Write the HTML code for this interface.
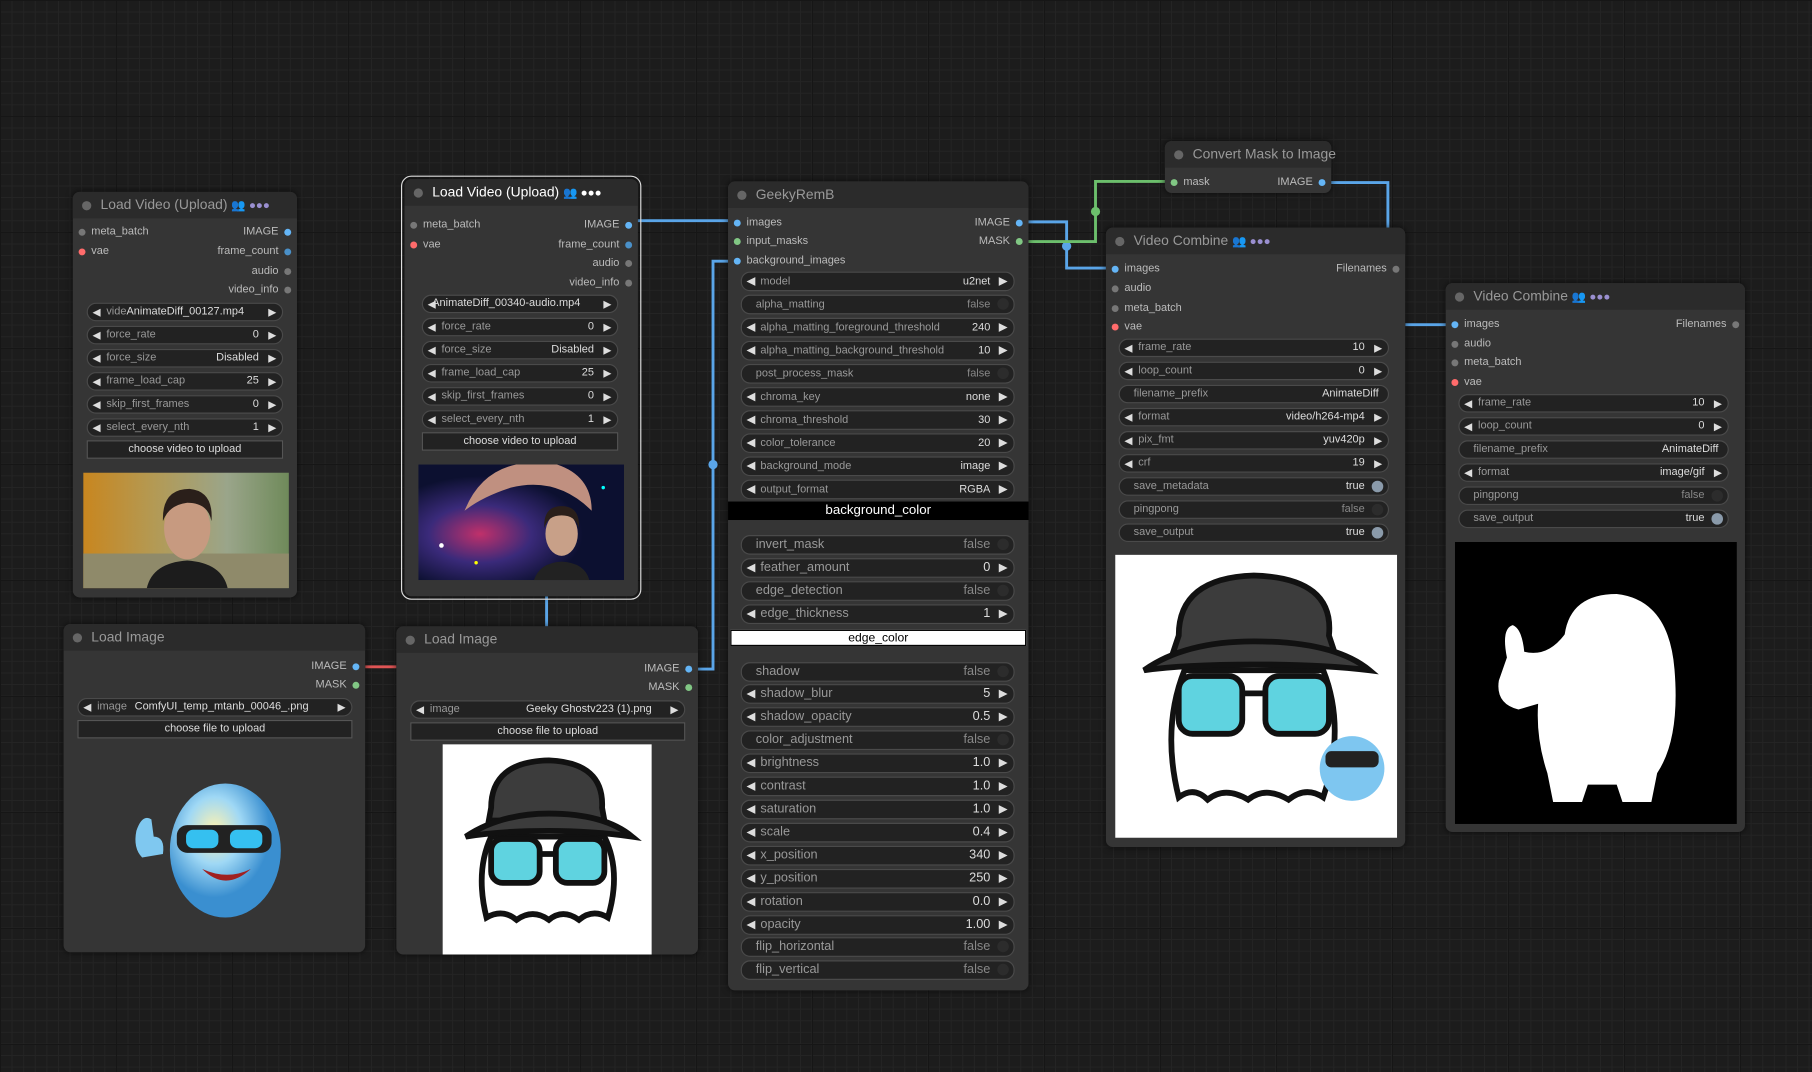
<!DOCTYPE html>
<html><head><meta charset="utf-8">
<style>
html,body{margin:0;padding:0;}
body{width:1812px;height:1072px;overflow:hidden;background:#1c1c1c;
background-image:linear-gradient(#161616 1px,transparent 1px),linear-gradient(90deg,#161616 1px,transparent 1px),linear-gradient(#242424 1px,transparent 1px),linear-gradient(90deg,#242424 1px,transparent 1px);
background-size:116px 116px,116px 116px,11.6px 11.6px,11.6px 11.6px;font-family:"Liberation Sans",sans-serif;}
#c{position:absolute;left:0;top:0;width:1568px;height:928px;transform:scale(1.15561);transform-origin:0 0;}
.n{position:absolute;background:#353535;border-radius:6px;box-shadow:0 0 6px rgba(0,0,0,.6);}
.t{position:absolute;left:0;right:0;top:0;height:23px;background:#2b2b2b;border-radius:6px 6px 0 0;color:#999;font-size:12px;line-height:23px;padding-left:24px;white-space:nowrap;}
.t:before{content:"";position:absolute;left:8px;top:8px;width:8px;height:8px;border-radius:50%;background:#666;}
.vhs{color:#9a8fd0;font-size:10px;letter-spacing:0px;}
.s{position:absolute;font-size:9.5px;color:#bbb;height:12px;line-height:12px;white-space:nowrap;}
.s.l{left:16px}.s.r{right:16px;text-align:right}
.s.l:before,.s.r:after{content:"";position:absolute;top:3px;width:6px;height:6px;border-radius:50%;background:var(--c,#777);}
.s.l:before{left:-11px}.s.r:after{right:-11px}
.w{position:absolute;height:14px;border:1px solid #4a4a4a;border-radius:8px;background:#222;font-size:9.5px;line-height:14px;color:#999;white-space:nowrap;overflow:hidden;}
.w .a{position:absolute;left:4px;color:#ddd;font-size:9px}
.w .b{position:absolute;right:5px;color:#ddd;font-size:9px}
.w .lb{position:absolute;left:16px}
.w .v{position:absolute;right:20px;color:#ddd}
.w.tg .lb{left:12px}.w.tg .v{right:20px;color:#888}
.w.tg .d{position:absolute;right:4px;top:2px;width:10px;height:10px;border-radius:50%;background:#2c2c2c}
.w.tg.on .v{color:#ddd}.w.tg.on .d{background:#8a9aaa}
.big .w{height:15px;line-height:15px;font-size:11px}
.big .w .a,.big .w .b{font-size:10px}
.bt{position:absolute;height:14px;border:1px solid #555;background:#222;color:#ddd;font-size:9.5px;line-height:14px;text-align:center;}
</style></head><body>
<div id="c">
<svg width="1568" height="928" style="position:absolute;left:0;top:0" fill="none" stroke-width="2.5">
<path d="M540 191 H637" stroke="#5aa5e8"/>
<path d="M596 579 H617 V226 H637" stroke="#5aa5e8"/>
<circle cx="617" cy="402" r="4" fill="#5aa5e8"/>
<path d="M473 516 V542" stroke="#5aa5e8"/>
<path d="M316 577 H343" stroke="#e05555"/>
<path d="M882 192 H923 V232 H963" stroke="#5aa5e8"/>
<circle cx="923" cy="213" r="4" fill="#5aa5e8"/>
<path d="M882 209 H948 V157 H1015" stroke="#6cbf6c"/>
<circle cx="948" cy="183" r="4" fill="#6cbf6c"/>
<path d="M1146 158 H1201 V200" stroke="#5aa5e8"/>
<path d="M1216 281 H1258" stroke="#5aa5e8"/>
</svg>

<!-- Load Video 1 -->
<div class="n" style="left:63px;top:166px;width:194px;height:351px">
<div class="t">Load Video (Upload) <span class="vhs">👥 ●●●</span></div>
<div class="s l" style="top:29px">meta_batch</div><div class="s r" style="top:29px;--c:#64b5f6">IMAGE</div>
<div class="s l" style="top:46px;--c:#ff6b6b">vae</div><div class="s r" style="top:46px;--c:#4a90c8">frame_count</div>
<div class="s r" style="top:63px;--c:#777">audio</div>
<div class="s r" style="top:79px">video_info</div>
<div class="w" style="left:12px;width:168px;top:96px"><span class="a">◀</span><span class="lb">vide<b style="color:#ddd;font-weight:normal">AnimateDiff_00127.mp4</b></span><span class="b">▶</span></div>
<div class="w" style="left:12px;width:168px;top:116px"><span class="a">◀</span><span class="lb">force_rate</span><span class="v">0</span><span class="b">▶</span></div>
<div class="w" style="left:12px;width:168px;top:136px"><span class="a">◀</span><span class="lb">force_size</span><span class="v">Disabled</span><span class="b">▶</span></div>
<div class="w" style="left:12px;width:168px;top:156px"><span class="a">◀</span><span class="lb">frame_load_cap</span><span class="v">25</span><span class="b">▶</span></div>
<div class="w" style="left:12px;width:168px;top:176px"><span class="a">◀</span><span class="lb">skip_first_frames</span><span class="v">0</span><span class="b">▶</span></div>
<div class="w" style="left:12px;width:168px;top:196px"><span class="a">◀</span><span class="lb">select_every_nth</span><span class="v">1</span><span class="b">▶</span></div>
<div class="bt" style="left:12px;width:168px;top:215px">choose video to upload</div>
<svg style="position:absolute;left:9px;top:243px" width="178" height="100" viewBox="0 0 178 100">
<defs><linearGradient id="au" x1="0" x2="1"><stop offset="0" stop-color="#c8861f"/><stop offset=".35" stop-color="#b39a55"/><stop offset=".7" stop-color="#9aa58a"/><stop offset="1" stop-color="#6f8a5a"/></linearGradient></defs>
<rect width="178" height="100" fill="url(#au)"/>
<rect y="70" width="178" height="30" fill="#8f8a6a"/>
<path d="M55 100 Q60 78 90 76 Q120 78 125 100Z" fill="#1c1c1c"/>
<ellipse cx="90" cy="48" rx="20" ry="27" fill="#c79a80"/>
<path d="M69 42 Q68 14 92 14 Q113 16 111 42 Q108 26 90 26 Q74 28 69 42Z" fill="#2a1f1a"/>
</svg>
</div>

<!-- Load Video 2 selected -->
<div class="n" style="left:350px;top:155px;width:202px;height:361px;outline:1.5px solid #ddd;outline-offset:2px">
<div class="t" style="color:#fff">Load Video (Upload) <span class="vhs" style="color:#fff">👥 ●●●</span></div>
<div class="s l" style="top:34px">meta_batch</div><div class="s r" style="top:34px;--c:#64b5f6">IMAGE</div>
<div class="s l" style="top:51px;--c:#ff6b6b">vae</div><div class="s r" style="top:51px;--c:#4a90c8">frame_count</div>
<div class="s r" style="top:67px">audio</div>
<div class="s r" style="top:84px">video_info</div>
<div class="w" style="left:15px;width:168px;top:100px"><span class="a">◀</span><span class="lb" style="left:8px;color:#ddd">AnimateDiff_00340-audio.mp4</span><span class="b">▶</span></div>
<div class="w" style="left:15px;width:168px;top:120px"><span class="a">◀</span><span class="lb">force_rate</span><span class="v">0</span><span class="b">▶</span></div>
<div class="w" style="left:15px;width:168px;top:140px"><span class="a">◀</span><span class="lb">force_size</span><span class="v">Disabled</span><span class="b">▶</span></div>
<div class="w" style="left:15px;width:168px;top:160px"><span class="a">◀</span><span class="lb">frame_load_cap</span><span class="v">25</span><span class="b">▶</span></div>
<div class="w" style="left:15px;width:168px;top:180px"><span class="a">◀</span><span class="lb">skip_first_frames</span><span class="v">0</span><span class="b">▶</span></div>
<div class="w" style="left:15px;width:168px;top:200px"><span class="a">◀</span><span class="lb">select_every_nth</span><span class="v">1</span><span class="b">▶</span></div>
<div class="bt" style="left:15px;width:168px;top:219px">choose video to upload</div>
<svg style="position:absolute;left:12px;top:247px" width="178" height="100" viewBox="0 0 178 100">
<defs><radialGradient id="cs" cx=".3" cy=".6"><stop offset="0" stop-color="#c0306a"/><stop offset=".5" stop-color="#3a2a7a"/><stop offset="1" stop-color="#0c1030"/></radialGradient></defs>
<rect width="178" height="100" fill="url(#cs)"/>
<path d="M40 40 Q60 -10 120 0 Q150 10 150 40 Q120 10 80 20 Q55 28 40 40Z" fill="#c09080"/>
<circle cx="20" cy="70" r="2" fill="#fff"/><circle cx="50" cy="85" r="1.5" fill="#ff0"/><circle cx="160" cy="20" r="1.5" fill="#0ff"/>
<path d="M100 100 Q105 85 124 84 Q144 85 148 100Z" fill="#222"/>
<ellipse cx="124" cy="60" rx="14" ry="19" fill="#c8a088"/>
<path d="M109 55 Q108 36 124 36 Q140 36 139 55 Q136 44 124 44 Q112 44 109 55Z" fill="#2a1f1a"/>
</svg>
</div>

<!-- GeekyRemB -->
<div class="n big" style="left:630px;top:157px;width:260px;height:700px">
<div class="t">GeekyRemB</div>
<div class="s l" style="top:30px;--c:#64b5f6">images</div><div class="s r" style="top:30px;--c:#64b5f6">IMAGE</div>
<div class="s l" style="top:46px;--c:#81c784">input_masks</div><div class="s r" style="top:46px;--c:#81c784">MASK</div>
<div class="s l" style="top:63px;--c:#64b5f6">background_images</div>
<div style="font-size:9.5px">
<div class="w" style="left:11px;width:235px;top:78px;font-size:9.5px"><span class="a">◀</span><span class="lb">model</span><span class="v">u2net</span><span class="b">▶</span></div>
<div class="w tg" style="left:11px;width:235px;top:98px;font-size:9.5px"><span class="lb">alpha_matting</span><span class="v">false</span><span class="d"></span></div>
<div class="w" style="left:11px;width:235px;top:118px;font-size:9.5px"><span class="a">◀</span><span class="lb">alpha_matting_foreground_threshold</span><span class="v">240</span><span class="b">▶</span></div>
<div class="w" style="left:11px;width:235px;top:138px;font-size:9.5px"><span class="a">◀</span><span class="lb">alpha_matting_background_threshold</span><span class="v">10</span><span class="b">▶</span></div>
<div class="w tg" style="left:11px;width:235px;top:158px;font-size:9.5px"><span class="lb">post_process_mask</span><span class="v">false</span><span class="d"></span></div>
<div class="w" style="left:11px;width:235px;top:178px;font-size:9.5px"><span class="a">◀</span><span class="lb">chroma_key</span><span class="v">none</span><span class="b">▶</span></div>
<div class="w" style="left:11px;width:235px;top:198px;font-size:9.5px"><span class="a">◀</span><span class="lb">chroma_threshold</span><span class="v">30</span><span class="b">▶</span></div>
<div class="w" style="left:11px;width:235px;top:218px;font-size:9.5px"><span class="a">◀</span><span class="lb">color_tolerance</span><span class="v">20</span><span class="b">▶</span></div>
<div class="w" style="left:11px;width:235px;top:238px;font-size:9.5px"><span class="a">◀</span><span class="lb">background_mode</span><span class="v">image</span><span class="b">▶</span></div>
<div class="w" style="left:11px;width:235px;top:258px;font-size:9.5px"><span class="a">◀</span><span class="lb">output_format</span><span class="v">RGBA</span><span class="b">▶</span></div>
</div>
<div style="position:absolute;left:0;width:260px;top:277px;height:16px;background:#000;color:#fff;font-size:11.5px;line-height:16px;text-align:center">background_color</div>
<div class="w tg" style="left:11px;width:235px;top:306px"><span class="lb">invert_mask</span><span class="v">false</span><span class="d"></span></div>
<div class="w" style="left:11px;width:235px;top:326px"><span class="a">◀</span><span class="lb">feather_amount</span><span class="v">0</span><span class="b">▶</span></div>
<div class="w tg" style="left:11px;width:235px;top:346px"><span class="lb">edge_detection</span><span class="v">false</span><span class="d"></span></div>
<div class="w" style="left:11px;width:235px;top:366px"><span class="a">◀</span><span class="lb">edge_thickness</span><span class="v">1</span><span class="b">▶</span></div>
<div style="position:absolute;left:2px;width:254px;top:388px;height:12px;background:#fff;border:1px solid #000;color:#000;font-size:10.5px;line-height:12px;text-align:center">edge_color</div>
<div class="w tg" style="left:11px;width:235px;top:416px"><span class="lb">shadow</span><span class="v">false</span><span class="d"></span></div>
<div class="w" style="left:11px;width:235px;top:435px"><span class="a">◀</span><span class="lb">shadow_blur</span><span class="v">5</span><span class="b">▶</span></div>
<div class="w" style="left:11px;width:235px;top:455px"><span class="a">◀</span><span class="lb">shadow_opacity</span><span class="v">0.5</span><span class="b">▶</span></div>
<div class="w tg" style="left:11px;width:235px;top:475px"><span class="lb">color_adjustment</span><span class="v">false</span><span class="d"></span></div>
<div class="w" style="left:11px;width:235px;top:495px"><span class="a">◀</span><span class="lb">brightness</span><span class="v">1.0</span><span class="b">▶</span></div>
<div class="w" style="left:11px;width:235px;top:515px"><span class="a">◀</span><span class="lb">contrast</span><span class="v">1.0</span><span class="b">▶</span></div>
<div class="w" style="left:11px;width:235px;top:535px"><span class="a">◀</span><span class="lb">saturation</span><span class="v">1.0</span><span class="b">▶</span></div>
<div class="w" style="left:11px;width:235px;top:555px"><span class="a">◀</span><span class="lb">scale</span><span class="v">0.4</span><span class="b">▶</span></div>
<div class="w" style="left:11px;width:235px;top:575px"><span class="a">◀</span><span class="lb">x_position</span><span class="v">340</span><span class="b">▶</span></div>
<div class="w" style="left:11px;width:235px;top:595px"><span class="a">◀</span><span class="lb">y_position</span><span class="v">250</span><span class="b">▶</span></div>
<div class="w" style="left:11px;width:235px;top:615px"><span class="a">◀</span><span class="lb">rotation</span><span class="v">0.0</span><span class="b">▶</span></div>
<div class="w" style="left:11px;width:235px;top:635px"><span class="a">◀</span><span class="lb">opacity</span><span class="v">1.00</span><span class="b">▶</span></div>
<div class="w tg" style="left:11px;width:235px;top:654px"><span class="lb">flip_horizontal</span><span class="v">false</span><span class="d"></span></div>
<div class="w tg" style="left:11px;width:235px;top:674px"><span class="lb">flip_vertical</span><span class="v">false</span><span class="d"></span></div>
</div>

<!-- Convert Mask -->
<div class="n" style="left:1008px;top:122px;width:144px;height:45px">
<div class="t">Convert Mask to Image</div>
<div class="s l" style="top:30px;--c:#81c784">mask</div><div class="s r" style="top:30px;--c:#64b5f6">IMAGE</div>
</div>

<!-- Video Combine 1 -->
<div class="n" style="left:957px;top:197px;width:259px;height:536px">
<div class="t">Video Combine <span class="vhs">👥 ●●●</span></div>
<div class="s l" style="top:30px;--c:#64b5f6">images</div><div class="s r" style="top:30px">Filenames</div>
<div class="s l" style="top:47px">audio</div>
<div class="s l" style="top:64px">meta_batch</div>
<div class="s l" style="top:80px;--c:#ff6b6b">vae</div>
<div class="w" style="left:11px;width:232px;top:96px"><span class="a">◀</span><span class="lb">frame_rate</span><span class="v">10</span><span class="b">▶</span></div>
<div class="w" style="left:11px;width:232px;top:116px"><span class="a">◀</span><span class="lb">loop_count</span><span class="v">0</span><span class="b">▶</span></div>
<div class="w tg on" style="left:11px;width:232px;top:136px"><span class="lb">filename_prefix</span><span class="v" style="right:8px">AnimateDiff</span></div>
<div class="w" style="left:11px;width:232px;top:156px"><span class="a">◀</span><span class="lb">format</span><span class="v">video/h264-mp4</span><span class="b">▶</span></div>
<div class="w" style="left:11px;width:232px;top:176px"><span class="a">◀</span><span class="lb">pix_fmt</span><span class="v">yuv420p</span><span class="b">▶</span></div>
<div class="w" style="left:11px;width:232px;top:196px"><span class="a">◀</span><span class="lb">crf</span><span class="v">19</span><span class="b">▶</span></div>
<div class="w tg on" style="left:11px;width:232px;top:216px"><span class="lb">save_metadata</span><span class="v">true</span><span class="d"></span></div>
<div class="w tg" style="left:11px;width:232px;top:236px"><span class="lb">pingpong</span><span class="v">false</span><span class="d"></span></div>
<div class="w tg on" style="left:11px;width:232px;top:256px"><span class="lb">save_output</span><span class="v">true</span><span class="d"></span></div>
<svg style="position:absolute;left:8px;top:283px" width="244" height="245" viewBox="0 0 244 245">
<rect width="244" height="245" fill="#fff"/>
<g stroke="#111" stroke-width="5">
<path d="M55 210 Q40 150 60 100 L180 100 Q200 150 180 210 Q165 200 150 212 Q130 200 115 212 Q95 200 80 212 Q68 200 55 210Z" fill="#fff"/>
<path d="M55 70 Q55 20 120 18 Q190 20 185 70 L190 85 L50 85Z" fill="#3c3c3c"/>
<path d="M25 100 Q60 75 120 75 Q190 75 220 100 Q180 95 120 95 Q60 95 25 100Z" fill="#3c3c3c"/>
<rect x="55" y="105" width="55" height="50" rx="12" fill="#5fd3e0"/>
<rect x="130" y="105" width="55" height="50" rx="12" fill="#5fd3e0"/>
<path d="M110 120 H130"/>
</g>
<circle cx="205" cy="185" r="28" fill="#7ec6f0"/>
<rect x="182" y="170" width="46" height="14" rx="5" fill="#222"/>
</svg>
</div>

<!-- Video Combine 2 -->
<div class="n" style="left:1251px;top:245px;width:259px;height:475px">
<div class="t">Video Combine <span class="vhs">👥 ●●●</span></div>
<div class="s l" style="top:30px;--c:#64b5f6">images</div><div class="s r" style="top:30px">Filenames</div>
<div class="s l" style="top:47px">audio</div>
<div class="s l" style="top:63px">meta_batch</div>
<div class="s l" style="top:80px;--c:#ff6b6b">vae</div>
<div class="w" style="left:11px;width:232px;top:96px"><span class="a">◀</span><span class="lb">frame_rate</span><span class="v">10</span><span class="b">▶</span></div>
<div class="w" style="left:11px;width:232px;top:116px"><span class="a">◀</span><span class="lb">loop_count</span><span class="v">0</span><span class="b">▶</span></div>
<div class="w tg on" style="left:11px;width:232px;top:136px"><span class="lb">filename_prefix</span><span class="v" style="right:8px">AnimateDiff</span></div>
<div class="w" style="left:11px;width:232px;top:156px"><span class="a">◀</span><span class="lb">format</span><span class="v">image/gif</span><span class="b">▶</span></div>
<div class="w tg" style="left:11px;width:232px;top:176px"><span class="lb">pingpong</span><span class="v">false</span><span class="d"></span></div>
<div class="w tg on" style="left:11px;width:232px;top:196px"><span class="lb">save_output</span><span class="v">true</span><span class="d"></span></div>
<svg style="position:absolute;left:8px;top:224px" width="244" height="244" viewBox="0 0 244 244">
<rect width="244" height="244" fill="#000"/>
<path d="M95 80 Q100 45 140 45 Q185 50 190 110 Q195 170 175 200 L170 225 H145 L140 210 H115 L110 225 H85 L80 200 Q70 170 72 140 L55 145 Q35 140 38 120 L45 100 Q40 75 50 72 Q58 75 60 95 Q80 100 95 80Z" fill="#fff"/>
</svg>
</div>

<!-- Load Image 1 -->
<div class="n" style="left:55px;top:540px;width:261px;height:284px">
<div class="t">Load Image</div>
<div class="s r" style="top:31px;--c:#64b5f6">IMAGE</div>
<div class="s r" style="top:47px;--c:#81c784">MASK</div>
<div class="w" style="left:12px;width:236px;top:64px"><span class="a">◀</span><span class="lb">image <b style="color:#ddd;font-weight:normal;margin-left:4px">ComfyUI_temp_mtanb_00046_.png</b></span><span class="b">▶</span></div>
<div class="bt" style="left:12px;width:236px;top:83px">choose file to upload</div>
<svg style="position:absolute;left:58px;top:134px" width="140" height="128" viewBox="0 0 140 128">
<defs><radialGradient id="bl" cx=".4" cy=".35"><stop offset="0" stop-color="#fff3b0"/><stop offset=".5" stop-color="#9fd8f5"/><stop offset="1" stop-color="#3a8fd0"/></radialGradient></defs>
<ellipse cx="82" cy="62" rx="48" ry="58" fill="url(#bl)"/>
<path d="M5 45 Q10 30 18 35 L20 50 Q30 50 28 65 L10 68 Q2 60 5 45Z" fill="#7fc8f0"/>
<rect x="40" y="40" width="82" height="24" rx="9" fill="#222"/>
<rect x="48" y="44" width="28" height="16" rx="6" fill="#35c0f0"/><rect x="86" y="44" width="28" height="16" rx="6" fill="#35c0f0"/>
<path d="M62 78 Q82 98 104 78 Q84 88 62 78Z" fill="#a02020"/>
</svg>
</div>

<!-- Load Image 2 -->
<div class="n" style="left:343px;top:542px;width:261px;height:284px">
<div class="t">Load Image</div>
<div class="s r" style="top:31px;--c:#64b5f6">IMAGE</div>
<div class="s r" style="top:47px;--c:#81c784">MASK</div>
<div class="w" style="left:12px;width:236px;top:64px"><span class="a">◀</span><span class="lb">image</span><span class="v" style="right:28px">Geeky Ghostv223 (1).png</span><span class="b">▶</span></div>
<div class="bt" style="left:12px;width:236px;top:83px">choose file to upload</div>
<svg style="position:absolute;left:40px;top:102px" width="181" height="182" viewBox="0 0 181 182">
<rect width="181" height="182" fill="#fff"/>
<g stroke="#111" stroke-width="5">
<path d="M38 150 Q28 110 42 80 L140 80 Q155 110 143 150 Q130 142 118 152 Q104 142 92 152 Q78 142 64 152 Q52 142 38 150Z" fill="#fff"/>
<path d="M42 55 Q42 15 92 14 Q140 16 138 55 L140 66 L40 66Z" fill="#3c3c3c"/>
<path d="M20 80 Q50 60 92 60 Q140 60 164 80 Q130 75 92 75 Q50 75 20 80Z" fill="#3c3c3c"/>
<rect x="42" y="82" width="42" height="38" rx="10" fill="#5fd3e0"/>
<rect x="98" y="82" width="42" height="38" rx="10" fill="#5fd3e0"/>
<path d="M84 95 H98"/>
</g>
</svg>
</div>

</div>
</body></html>
